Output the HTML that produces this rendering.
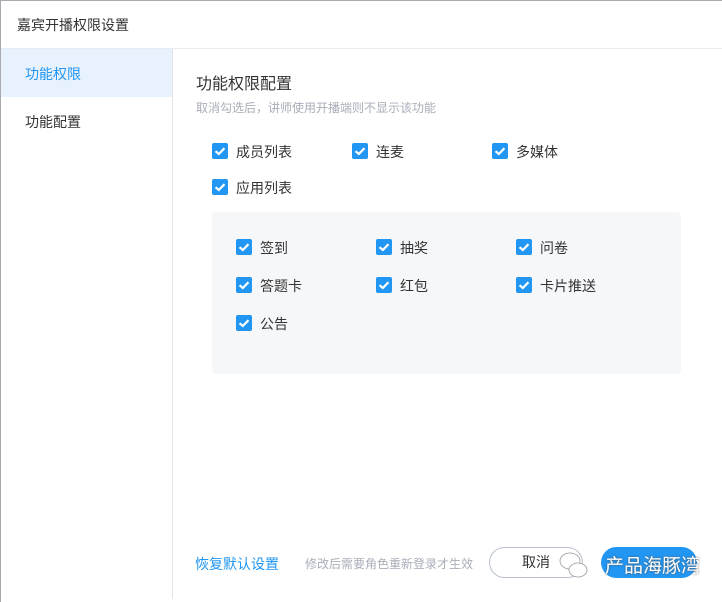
<!DOCTYPE html>
<html><head><meta charset="utf-8"><style>
*{margin:0;padding:0;box-sizing:border-box}
body{width:722px;height:602px;background:#fff;position:relative;overflow:hidden;font-family:"Liberation Sans","Noto Sans CJK SC",sans-serif;color:#333}
.a{position:absolute;white-space:nowrap}
.cb{position:absolute;width:16px;height:16px;background:#2196f3;border-radius:2px}
.cb svg{position:absolute;left:0;top:0}
.t{position:absolute;font-size:14px;line-height:18px;color:#333}
</style></head><body>
<div class="a" style="left:0;top:0;width:722px;height:1px;background:#a9a9b0"></div>
<div class="a" style="left:0;top:0;width:1px;height:602px;background:#a9a9b0"></div>
<div class="a" style="left:17px;top:15px;font-size:14px;line-height:20px;color:#333">嘉宾开播权限设置</div>
<div class="a" style="left:1px;top:48px;width:721px;height:1px;background:#e8ecf2"></div>
<div class="a" style="left:1px;top:49px;width:171px;height:48px;background:#e8f2fe"></div>
<div class="a" style="left:172px;top:49px;width:1px;height:550px;background:#e4e4e6"></div>
<div class="a" style="left:25px;top:64px;font-size:14px;line-height:20px;color:#2196f3">功能权限</div>
<div class="a" style="left:25px;top:112px;font-size:14px;line-height:20px;color:#333">功能配置</div>
<div class="a" style="left:196px;top:74px;font-size:16px;line-height:22px;color:#333">功能权限配置</div>
<div class="a" style="left:196px;top:100px;font-size:12px;line-height:16px;color:#a8adb8">取消勾选后，讲师使用开播端则不显示该功能</div>
<div class="a" style="left:212px;top:212px;width:469px;height:162px;background:#f6f7f9;border-radius:4px"></div>
<div id="c"></div>
<div class="a" style="left:195px;top:554px;font-size:14px;line-height:20px;color:#2196f3">恢复默认设置</div>
<div class="a" style="left:305px;top:556px;font-size:12px;line-height:16px;color:#a8adb8">修改后需要角色重新登录才生效</div>
<div class="a" style="left:489px;top:547px;width:94px;height:31px;border:1px solid #b8c0cc;border-radius:16px;text-align:center;font-size:14px;line-height:29px;color:#333">取消</div>
<div class="a" style="left:601px;top:547px;width:96px;height:31px;background:#2196f3;border-radius:16px"></div>
<div class="a" style="left:556px;top:548px;width:40px;height:34px">
<svg width="40" height="34"><ellipse cx="14" cy="13" rx="10" ry="8" fill="#fff" stroke="#999" stroke-width="0.8"/><ellipse cx="22" cy="22" rx="9" ry="7" fill="#fff" stroke="#999" stroke-width="0.8"/></svg></div>
<div class="a" style="left:605px;top:555px;font-size:19px;line-height:24px;color:#fff;text-shadow:0 0 2px #555">产品海豚湾</div>
<script>
var items=[[212,143,"成员列表"],[352,143,"连麦"],[492,143,"多媒体"],[212,179,"应用列表"],
[236,239,"签到"],[376,239,"抽奖"],[516,239,"问卷"],[236,277,"答题卡"],[376,277,"红包"],[516,277,"卡片推送"],[236,315,"公告"]];
var h="";items.forEach(function(i){h+='<div class="cb" style="left:'+i[0]+'px;top:'+i[1]+'px"><svg width="16" height="16"><path d="M3.5 8.2 L6.8 11 L12.5 5.2" fill="none" stroke="#fff" stroke-width="2.2"/></svg></div><div class="t" style="left:'+(i[0]+24)+'px;top:'+i[1]+'px">'+i[2]+'</div>';});
document.getElementById("c").innerHTML=h;
</script>
</body></html>
